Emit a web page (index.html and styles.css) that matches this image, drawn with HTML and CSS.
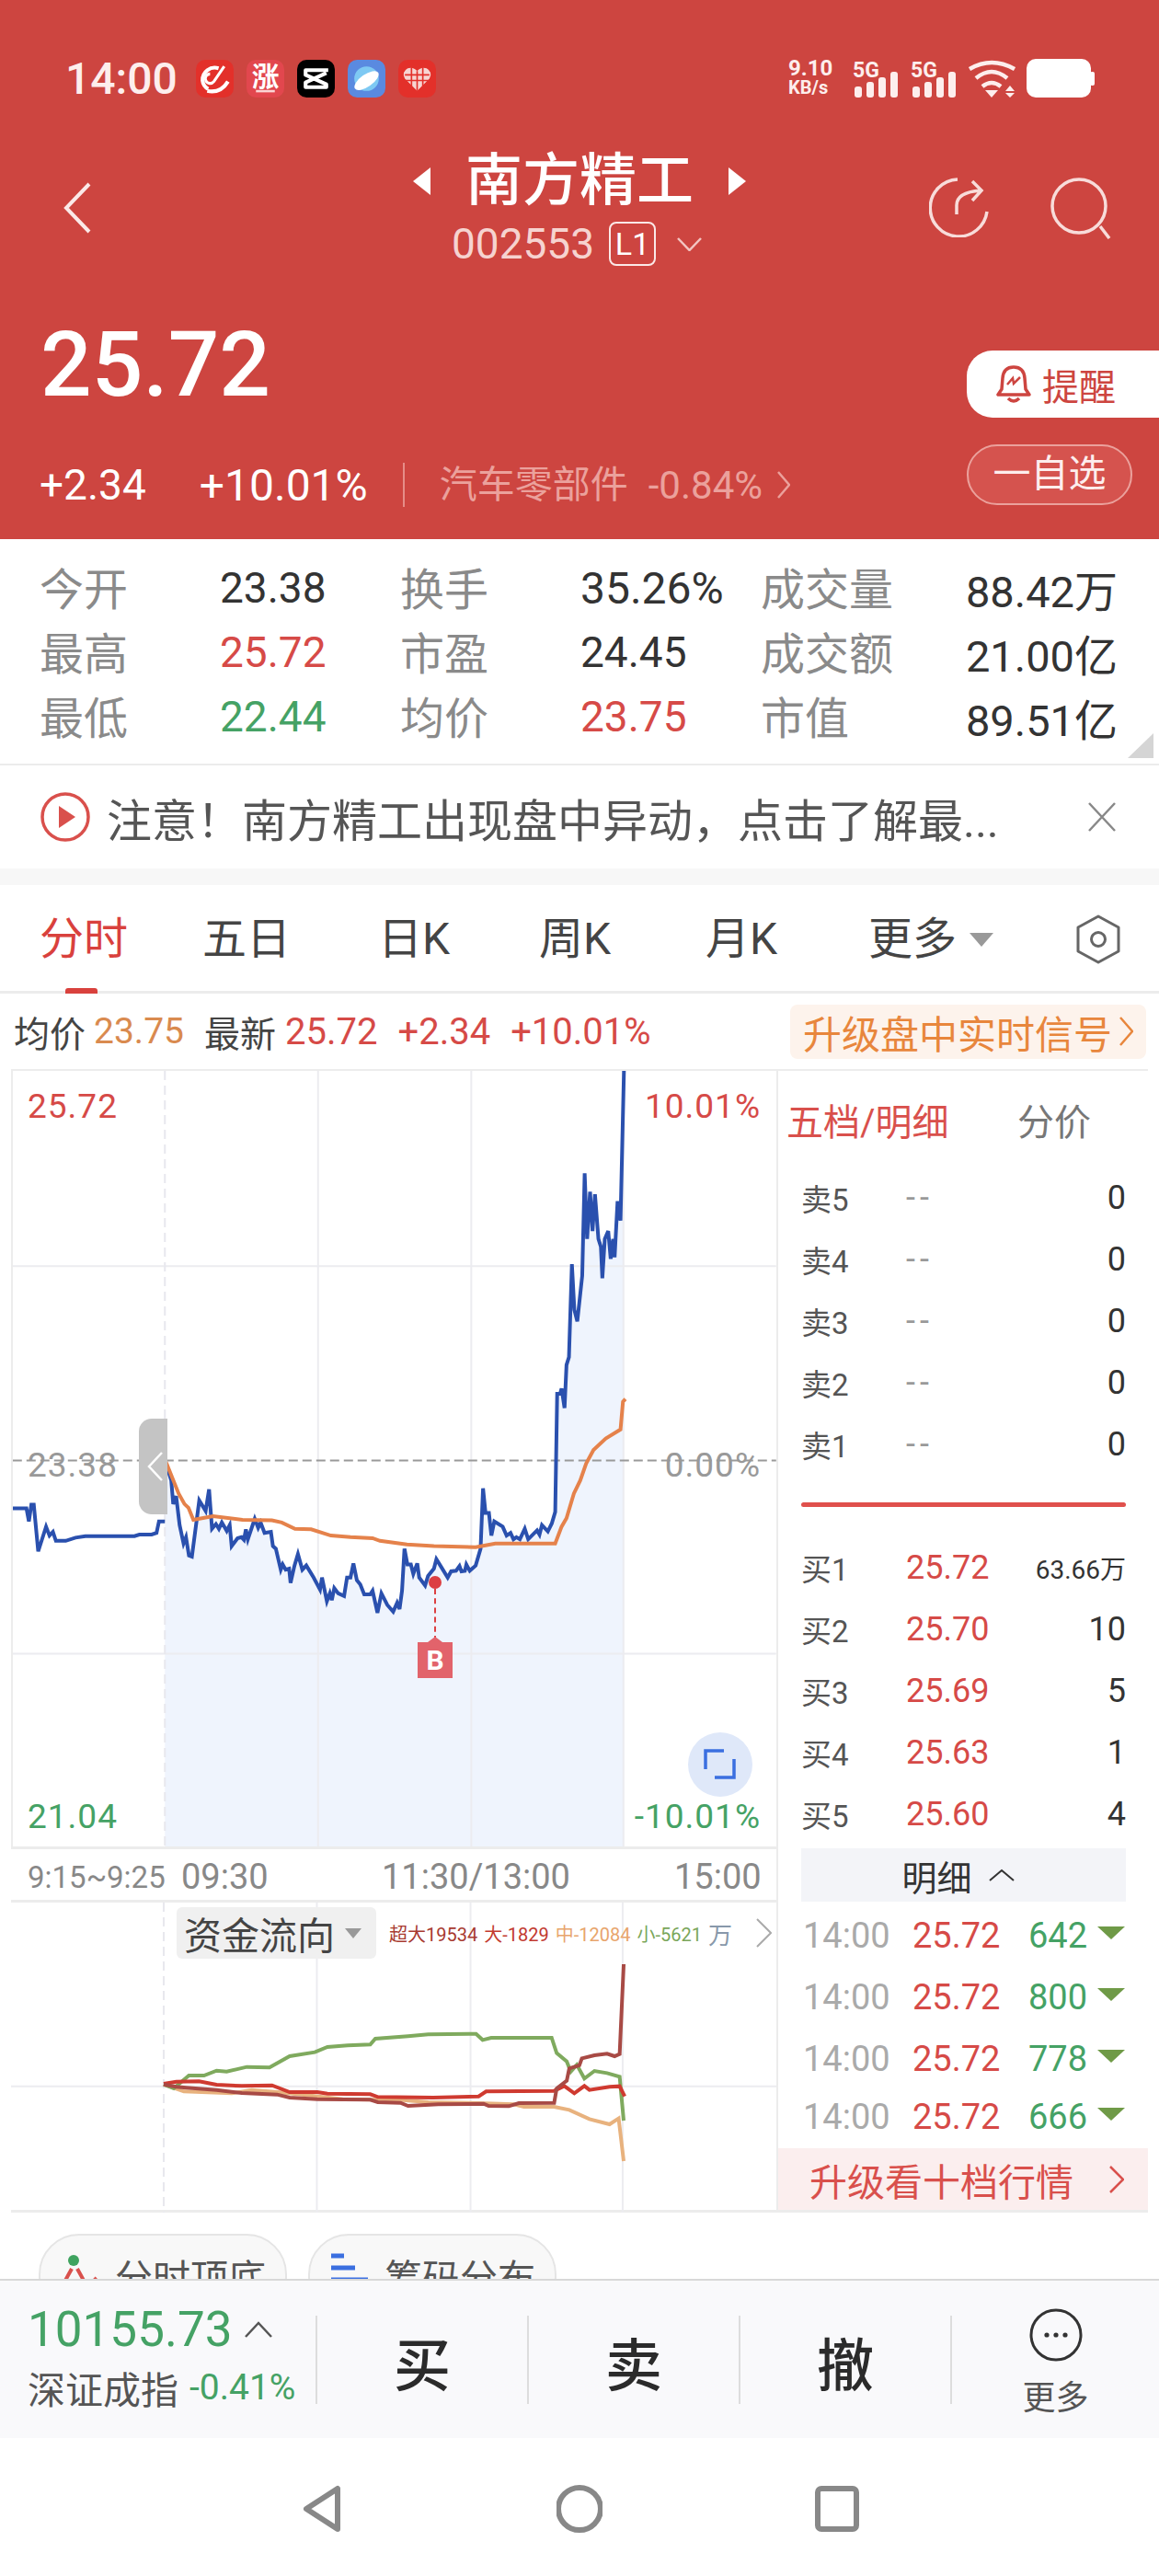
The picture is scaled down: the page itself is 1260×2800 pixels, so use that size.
FILE: index.html
```html
<!DOCTYPE html>
<html lang="zh-CN">

<head>
    <meta charset="UTF-8">
    <meta name="viewport" content="width=device-width, initial-scale=1.0">
    <title>南方精工 002553</title>
    <link rel="stylesheet" href="styles.css">
</head>

<body>
    <header class="top">
        <div class="status">
            <span class="clock">14:00</span>
            <div class="app-icons">
                <svg class="app" viewBox="0 0 40 40"><rect width="40" height="40" rx="10" fill="#e3302a"/><path d="M24 9 A13 13 0 0 0 7 22 A12 12 0 0 0 13 31" fill="none" stroke="#fff" stroke-width="4"/><path d="M30 7 L19 23 A5 5 0 1 1 15 15" fill="none" stroke="#fff" stroke-width="3"/><path d="M12 33 Q26 36 34 23" fill="none" stroke="#fff" stroke-width="4"/></svg>
                <svg class="app" viewBox="0 0 40 40"><rect width="40" height="40" rx="10" fill="#e2474e"/><text x="20" y="28" text-anchor="middle" class="app-text">涨</text><rect x="10" y="32" width="20" height="2.5" fill="#fbd5d5"/></svg>
                <svg class="app" viewBox="0 0 40 40"><rect width="40" height="40" rx="10" fill="#000"/><path d="M33 11 L9 11 L9 16 L31 26 L31 29 L9 29 L9 24 L31 14" fill="none" stroke="#fff" stroke-width="4" stroke-linejoin="round"/></svg>
                <svg class="app" viewBox="0 0 40 40"><rect width="40" height="40" rx="10" fill="#5a8ae0"/><circle cx="20" cy="20" r="13" fill="#7ec9f3"/><ellipse cx="20" cy="22" rx="15" ry="6.5" fill="#fff" transform="rotate(-35 20 22)"/></svg>
                <svg class="app" viewBox="0 0 40 40"><rect width="40" height="40" rx="10" fill="#e3302a"/><path d="M20 33 L7 20 Q3 13 10 9 Q16 7 20 12 Q24 7 30 9 Q37 13 33 20 Z" fill="#f7d5d2"/><path d="M7 16 H33 M8 22 H32 M14 8 V28 M20 12 V33 M26 8 V28" stroke="#e3302a" stroke-width="1.6"/></svg>
            </div>
            <div class="net">
                <div class="speed"><b>9.10</b><b>KB/s</b></div>
                <div class="signal">
                    <b>5G</b>
                    <div class="bars"><i class="b1"></i><i class="b2"></i><i class="b3"></i><i class="b4"></i></div>
                </div>
                <div class="signal">
                    <b>5G</b>
                    <div class="bars"><i class="b1"></i><i class="b2"></i><i class="b3"></i><i class="b4"></i></div>
                </div>
                <svg class="wifi" viewBox="0 0 51 41"><path d="M1 10 Q25 -4 50 10 M8 20 Q25 6 42 20 M15 29 Q25 21 35 29" fill="none" stroke="#fdeeed" stroke-width="4.5"/><path d="M18 33 H32 L25 41 Z M45 28 L50 34 H40 Z M40 36 H50 L45 41 Z" fill="#fdeeed"/></svg>
                <svg class="battery" viewBox="0 0 74 42"><rect width="70" height="42" rx="10" fill="#fff"/><rect x="69" y="14" width="5" height="15" rx="2" fill="#fff"/></svg>
            </div>
        </div>

        <div class="titlebar">
            <div class="title-left">
                <svg class="back" viewBox="0 0 32 56"><path d="M29 2 L4 28 L29 54" fill="none" stroke="#fbe9e8" stroke-width="4"/></svg>
            </div>
            <div class="title-mid">
                <div class="name-row">
                    <span class="tri-left"></span>
                    <h1>南方精工</h1>
                    <span class="tri-right"></span>
                </div>
                <div class="code-row">
                    <span class="code">002553</span>
                    <span class="level">L1</span>
                    <svg class="code-arrow" viewBox="0 0 27 15"><path d="M1 1 L13.5 14 L26 1" fill="none" stroke="#f3c5c2" stroke-width="2.5"/></svg>
                </div>
            </div>
            <div class="title-right">
                <svg class="share" viewBox="0 0 66 66"><path d="M31 3 A31 31 0 1 0 63 38" fill="none" stroke="#f8dcda" stroke-width="3.5"/><path d="M30 41 V31 Q30 17 56 15 M47 5 L57 15 L47 26" fill="none" stroke="#f8dcda" stroke-width="3.5"/></svg>
                <svg class="search" viewBox="0 0 66 68"><circle cx="31" cy="32" r="29" fill="none" stroke="#f8dcda" stroke-width="3.5"/><path d="M54 54 L64 67" stroke="#f8dcda" stroke-width="3.5"/></svg>
            </div>
        </div>

        <div class="quote">
            <div class="quote-main">
                <div class="price">25.72</div>
                <div class="change-row">
                    <span class="chg">+2.34</span>
                    <span class="pct">+10.01%</span>
                    <span class="sector">汽车零部件</span>
                    <span class="sector-pct">-0.84%</span>
                    <svg class="sector-arrow" viewBox="0 0 14 30"><path d="M1 1 L13 15 L1 29" fill="none" stroke="#eba19c" stroke-width="2.5"/></svg>
                </div>
            </div>
            <div class="quote-btns">
                <div class="remind">
                    <svg class="bell" viewBox="0 0 38 44"><path d="M19 3 Q8 3 7 15 L6 27 L2 33 H36 L32 27 L31 15 Q30 3 19 3 Z M13 37 Q19 43 25 37" fill="none" stroke="#cd4540" stroke-width="3.5" stroke-linejoin="round"/><path d="M12 22 L18 15 L19 21 L26 14" fill="none" stroke="#cd4540" stroke-width="2.5"/></svg>
                    <span>提醒</span>
                </div>
                <div class="watch">一自选</div>
            </div>
        </div>
    </header>

    <section class="stats">
        <span class="lbl">今开</span><span>23.38</span><span class="lbl">换手</span><span class="wide">35.26%</span><span class="lbl">成交量</span><span class="end">88.42万</span>
        <span class="lbl">最高</span><span class="up">25.72</span><span class="lbl">市盈</span><span>24.45</span><span class="lbl">成交额</span><span class="end">21.00亿</span>
        <span class="lbl">最低</span><span class="down">22.44</span><span class="lbl">均价</span><span class="up">23.75</span><span class="lbl">市值</span><span class="end">89.51亿</span>
        <i class="corner"></i>
    </section>

    <section class="notice">
        <svg class="play" viewBox="0 0 54 54"><circle cx="27" cy="27" r="25" fill="none" stroke="#d9504c" stroke-width="3.5"/><path d="M20 15 L38 27 L20 39 Z" fill="#d9504c"/></svg>
        <span class="notice-text">注意！南方精工出现盘中异动，点击了解最...</span>
        <svg class="close" viewBox="0 0 32 32"><path d="M2 1 L30 31 M30 1 L2 31" stroke="#888" stroke-width="2.5"/></svg>
    </section>

    <nav class="tabs">
        <span class="tab on">分时</span>
        <span class="tab">五日</span>
        <span class="tab">日K</span>
        <span class="tab">周K</span>
        <span class="tab">月K</span>
        <span class="tab more">更多<i class="more-tri"></i></span>
        <svg class="gear" viewBox="0 0 48 54"><path d="M24 2 L46 14 V40 L24 52 L2 40 V14 Z" fill="none" stroke="#666" stroke-width="3" stroke-linejoin="round"/><circle cx="24" cy="27" r="7.5" fill="none" stroke="#666" stroke-width="3"/></svg>
    </nav>

    <div class="subrow">
        <span>均价</span><span class="avg">23.75</span>
        <span class="sub-next">最新</span><span class="sub-val">25.72</span>
        <span class="sub-val sub-gap">+2.34</span>
        <span class="sub-val sub-gap">+10.01%</span>
        <div class="signal-tag">升级盘中实时信号<svg viewBox="0 0 15 32"><path d="M1 1 L14 16 L1 31" fill="none" stroke="#e8863c" stroke-width="2.5"/></svg></div>
    </div>

    <main class="board">
        <div class="charts">
            <div class="price-chart">
                <svg class="plot" viewBox="22.4 20 1555 1477" preserveAspectRatio="none">
                    <polygon class="area" points="332,1497 332,762 345,800 349,845 355,830 362,885 370,920 375,908 381,943 387,945 402,838 415,858 422,817 428,892 436,883 442,892 448,880 458,896 464,885 468,925 480,910 488,908 493,913 497,893 501,912 515,873 522,890 527,880 535,900 548,898 552,925 558,930 568,970 572,960 578,970 585,968 588,995 596,962 603,940 612,970 620,962 635,985 648,1008 652,985 662,1030 668,1015 672,1028 677,1005 685,1015 697,1020 703,985 710,985 716,958 723,990 730,998 738,1017 750,1017 755,1010 765,1052 773,1015 785,1037 797,1050 805,1033 810,1045 815,1010 820,930 826,960 833,960 838,978 846,958 850,985 862,1000 868,982 880,968 885,950 895,965 908,985 915,973 925,972 932,963 936,973 943,972 946,960 953,972 965,962 975,930 980,815 985,862 992,862 997,905 1003,878 1020,888 1028,905 1036,900 1042,912 1048,908 1055,912 1065,892 1072,912 1090,895 1095,903 1100,885 1112,897 1120,882 1127,860 1131,635 1137,635 1140,625 1146,662 1150,580 1155,565 1161,388 1166,475 1172,497 1182,410 1187,215 1192,340 1198,250 1203,325 1208,255 1215,340 1220,355 1223,415 1228,340 1235,325 1240,378 1245,340 1248,375 1254,268 1260,305 1266,20 1266,1497"/>
                    <path class="grid" d="M22 392 H1577 M22 1130 H1577 M644 20 V1497 M956 20 V1497 M1266 20 V1497"/>
                    <path class="grid-dash" d="M332 20 V1497"/>
                    <path class="zero" d="M22 762 H1577"/>
                    <polyline class="line-blue" points="22,853 50,853 55,878 60,846 65,846 74,935 90,888 97,905 104,898 110,915 130,915 150,909 170,906 270,906 280,903 305,903 315,900 320,878 332,878"/>
                    <polyline class="line-blue" points="332,762 345,800 349,845 355,830 362,885 370,920 375,908 381,943 387,945 402,838 415,858 422,817 428,892 436,883 442,892 448,880 458,896 464,885 468,925 480,910 488,908 493,913 497,893 501,912 515,873 522,890 527,880 535,900 548,898 552,925 558,930 568,970 572,960 578,970 585,968 588,995 596,962 603,940 612,970 620,962 635,985 648,1008 652,985 662,1030 668,1015 672,1028 677,1005 685,1015 697,1020 703,985 710,985 716,958 723,990 730,998 738,1017 750,1017 755,1010 765,1052 773,1015 785,1037 797,1050 805,1033 810,1045 815,1010 820,930 826,960 833,960 838,978 846,958 850,985 862,1000 868,982 880,968 885,950 895,965 908,985 915,973 925,972 932,963 936,973 943,972 946,960 953,972 965,962 975,930 980,815 985,862 992,862 997,905 1003,878 1020,888 1028,905 1036,900 1042,912 1048,908 1055,912 1065,892 1072,912 1090,895 1095,903 1100,885 1112,897 1120,882 1127,860 1131,635 1137,635 1140,625 1146,662 1150,580 1155,565 1161,388 1166,475 1172,497 1182,410 1187,215 1192,340 1198,250 1203,325 1208,255 1215,340 1220,355 1223,415 1228,340 1235,325 1240,378 1245,340 1248,375 1254,268 1260,305 1267,20"/>
                    <polyline class="line-orange" points="332,760 345,790 360,825 372,845 380,852 390,875 430,868 490,875 550,876 570,880 597,892 630,893 670,905 710,908 755,910 770,915 825,922 880,925 965,927 1005,920 1127,920 1140,888 1150,872 1165,825 1178,800 1190,768 1205,742 1230,720 1260,703 1265,650 1270,645"/>
                </svg>
                <span class="tag tag-l up tag-top">25.72</span>
                <span class="tag tag-r up tag-top">10.01%</span>
                <span class="tag tag-l mute tag-mid">23.38</span>
                <span class="tag tag-r mute tag-mid">0.00%</span>
                <span class="tag tag-l down tag-low">21.04</span>
                <span class="tag tag-r down tag-low">-10.01%</span>
                <div class="handle"><svg viewBox="0 0 17 32"><path d="M16 1 L2 16 L16 31" fill="none" stroke="#fff" stroke-width="2.5"/></svg></div>
                <i class="buy-dot"></i>
                <i class="buy-stem"></i>
                <span class="buy-flag">B</span>
                <div class="expand"><svg viewBox="0 0 70 70"><path d="M39 20 H19 V40 M50 29 V49 H29" fill="none" stroke="#3b6fe0" stroke-width="3.5"/></svg></div>
            </div>

            <div class="axis">
                <span>9:15~9:25</span>
                <span class="axis-big">09:30</span>
                <span class="axis-big">11:30/13:00</span>
                <span class="axis-big">15:00</span>
            </div>

            <div class="flow">
                <svg class="plot" viewBox="22 204 1519 1011" preserveAspectRatio="none">
                    <path class="grid" d="M22 803 H1541 M629 204 V1215 M934 204 V1215 M1236 204 V1215"/>
                    <path class="grid-dash" d="M325 204 V1215"/>
                    <polyline class="f-mid" points="325,797 365,820 460,826 500,815 550,822 600,830 680,845 800,848 850,855 950,858 1020,862 1040,870 1100,870 1130,880 1170,910 1210,927 1228,908 1238,1047"/>
                    <polyline class="f-small" points="325,797 345,810 375,768 405,768 430,752 450,755 490,740 535,742 575,705 625,692 650,675 690,670 735,667 745,648 810,640 850,634 945,632 958,652 975,645 1095,645 1105,695 1125,722 1133,755 1145,733 1160,778 1180,753 1205,760 1230,772 1238,915"/>
                    <polyline class="f-big" points="325,795 350,788 395,787 430,798 480,802 540,800 575,822 630,822 650,827 735,829 750,838 860,840 950,836 965,820 1100,818 1120,802 1140,826 1160,802 1170,815 1210,805 1230,803 1240,836"/>
                    <polyline class="f-huge" points="325,797 350,805 370,808 430,815 480,825 550,830 575,840 630,845 735,847 750,855 795,857 810,867 870,862 960,860 970,867 1010,868 1030,858 1100,857 1105,810 1125,785 1130,745 1150,735 1155,712 1180,702 1205,697 1220,705 1230,698 1238,405"/>
                </svg>
                <div class="flow-head">
                    <div class="flow-pick">资金流向<i class="pick-tri"></i></div>
                    <div class="legend">
                        <span class="c-huge">超大19534</span>
                        <span class="c-big">大-1829</span>
                        <span class="c-mid">中-12084</span>
                        <span class="c-small">小-5621</span>
                        <span class="c-unit">万</span>
                    </div>
                    <svg class="legend-arrow" viewBox="0 0 17 32"><path d="M1 1 L16 16 L1 31" fill="none" stroke="#aaa" stroke-width="2"/></svg>
                </div>
            </div>
        </div>

        <aside class="side">
            <div class="side-head"><span class="side-title">五档/明细</span><span class="side-alt">分价</span></div>
            <div class="book">
                <div class="row"><span class="who">卖5</span><span class="none">--</span><span class="vol">0</span></div>
                <div class="row"><span class="who">卖4</span><span class="none">--</span><span class="vol">0</span></div>
                <div class="row"><span class="who">卖3</span><span class="none">--</span><span class="vol">0</span></div>
                <div class="row"><span class="who">卖2</span><span class="none">--</span><span class="vol">0</span></div>
                <div class="row"><span class="who">卖1</span><span class="none">--</span><span class="vol">0</span></div>
                <div class="rule"></div>
                <div class="row"><span class="who">买1</span><span class="up">25.72</span><span class="vol vol-sm">63.66万</span></div>
                <div class="row"><span class="who">买2</span><span class="up">25.70</span><span class="vol">10</span></div>
                <div class="row"><span class="who">买3</span><span class="up">25.69</span><span class="vol">5</span></div>
                <div class="row"><span class="who">买4</span><span class="up">25.63</span><span class="vol">1</span></div>
                <div class="row"><span class="who">买5</span><span class="up">25.60</span><span class="vol">4</span></div>
                <div class="detail-bar">明细<svg viewBox="0 0 28 14"><path d="M1 13 L14 2 L27 13" fill="none" stroke="#333" stroke-width="2"/></svg></div>
                <div class="tick"><span class="t">14:00</span><span class="up">25.72</span><span class="down">642</span><i class="tick-tri"></i></div>
                <div class="tick"><span class="t">14:00</span><span class="up">25.72</span><span class="down">800</span><i class="tick-tri"></i></div>
                <div class="tick"><span class="t">14:00</span><span class="up">25.72</span><span class="down">778</span><i class="tick-tri"></i></div>
                <div class="tick"><span class="t">14:00</span><span class="up">25.72</span><span class="down">666</span><i class="tick-tri"></i></div>
            </div>
            <div class="upgrade"><span>升级看十档行情</span><svg viewBox="0 0 16 30"><path d="M1 1 L15 15 L1 29" fill="none" stroke="#d9504c" stroke-width="2.5"/></svg></div>
        </aside>
    </main>

    <div class="chips">
        <div class="chip">
            <svg viewBox="0 0 44 50"><circle cx="15" cy="9" r="6" fill="#3fa35f"/><path d="M13 18 L2 38 M19 18 L30 38 L40 28" fill="none" stroke="#d9504c" stroke-width="4"/></svg>
            <span>分时顶底</span>
        </div>
        <div class="chip">
            <svg viewBox="0 0 40 50"><path d="M0 4 H14 M0 17 H26 M0 30 H40" stroke="#3b6fe0" stroke-width="5"/></svg>
            <span>筹码分布</span>
        </div>
    </div>

    <footer class="tradebar">
        <div class="index">
            <div class="index-top"><span class="index-val">10155.73</span><svg viewBox="0 0 30 18"><path d="M1 17 L15 2 L29 17" fill="none" stroke="#555" stroke-width="2.5"/></svg></div>
            <div class="index-sub"><span>深证成指</span><span class="index-pct">-0.41%</span></div>
        </div>
        <div class="trade">买</div>
        <div class="trade">卖</div>
        <div class="trade">撤</div>
        <div class="trade-more">
            <svg viewBox="0 0 58 58"><circle cx="29" cy="29" r="27" fill="none" stroke="#333" stroke-width="3"/><circle cx="19" cy="29" r="2.6" fill="#333"/><circle cx="29" cy="29" r="2.6" fill="#333"/><circle cx="39" cy="29" r="2.6" fill="#333"/></svg>
            <span>更多</span>
        </div>
    </footer>

    <div class="sysnav">
        <svg viewBox="0 0 50 52"><path d="M42 4 V48 L8 26 Z" fill="none" stroke="#888" stroke-width="6" stroke-linejoin="round"/></svg>
        <svg viewBox="0 0 50 52"><circle cx="25" cy="26" r="23" fill="none" stroke="#888" stroke-width="6"/></svg>
        <svg viewBox="0 0 50 52"><rect x="4" y="4" width="42" height="44" rx="4" fill="none" stroke="#888" stroke-width="6"/></svg>
    </div>
</body>

</html>
```

FILE: styles.css
```css
/* --- Общие стили --- */
:root {
    --red: #cd4540;
    --up: #d64a47;
    --down: #45a265;
    --line: #ececec;
    --font: Roboto, "Noto Sans CJK SC", sans-serif;
}

* {
    box-sizing: border-box;
}

body {
    margin: 0;
    width: 1260px;
    height: 2800px;
    overflow: hidden;
    background: #fff;
    color: #333;
    font-family: var(--font);
}

i {
    display: block;
}

.up {
    color: var(--up);
}

.down {
    color: var(--down);
}

.mute {
    color: #999;
}

/* --- Красная шапка --- */
.top {
    height: 586px;
    padding-top: 64px;
    background: var(--red);
    color: #fff;
}

.status {
    display: flex;
    align-items: center;
    height: 42px;
    padding: 0 70px 0 71px;
}

.clock {
    width: 122px;
    font-size: 48px;
    font-weight: 500;
    color: #fdeeed;
}

.app-icons {
    display: flex;
    gap: 14px;
    margin-left: 20px;
}

.app {
    width: 41px;
    height: 41px;
}

.app-text {
    font-size: 29px;
    font-weight: 700;
    fill: #fff;
}

.net {
    display: flex;
    align-items: flex-end;
    height: 42px;
    margin-left: auto;
    color: #fdeeed;
}

.speed {
    display: flex;
    flex-direction: column;
    width: 70px;
    line-height: 21px;
}

.speed b:first-child {
    font-size: 24px;
}

.speed b:last-child {
    font-size: 20px;
}

.signal {
    width: 63px;
    display: flex;
    flex-direction: column;
    line-height: 18px;
}

.signal b {
    font-size: 23px;
    margin-bottom: -8px;
}

.bars {
    display: flex;
    align-items: flex-end;
    gap: 5px;
    height: 28px;
    padding-left: 2px;
}

.bars i {
    width: 8px;
    border-radius: 3px;
    background: #fdeeed;
}

.b1 {
    height: 12px;
}

.b2 {
    height: 17px;
}

.b3 {
    height: 22px;
}

.b4 {
    height: 28px;
}

.wifi {
    width: 51px;
    height: 41px;
    margin-right: 12px;
}

.battery {
    width: 74px;
    height: 42px;
}

.titlebar {
    display: grid;
    grid-template-columns: 1fr auto 1fr;
    align-items: center;
    margin-top: 56px;
}

.title-left {
    padding-left: 68px;
}

.back {
    display: block;
    width: 32px;
    height: 56px;
}

.name-row {
    display: flex;
    align-items: center;
    justify-content: center;
    gap: 38px;
    height: 70px;
}

.name-row h1 {
    margin: 0;
    font-size: 62px;
    font-weight: 500;
    line-height: 70px;
}

.tri-left,
.tri-right {
    width: 0;
    height: 0;
    border-top: 15px solid transparent;
    border-bottom: 15px solid transparent;
}

.tri-left {
    border-right: 19px solid #fff;
}

.tri-right {
    border-left: 19px solid #fff;
}

.code-row {
    display: flex;
    align-items: center;
    justify-content: center;
    height: 48px;
    margin-top: 9px;
    padding-right: 6px;
}

.code {
    font-size: 46px;
    color: #f6d3d0;
}

.level {
    width: 51px;
    height: 48px;
    margin-left: 16px;
    border: 2px solid #fbe9e8;
    border-radius: 8px;
    font-size: 34px;
    line-height: 44px;
    text-align: center;
}

.code-arrow {
    width: 27px;
    height: 15px;
    margin-left: 23px;
}

.title-right {
    display: flex;
    justify-content: flex-end;
    gap: 66px;
    padding-right: 52px;
}

.share {
    width: 66px;
    height: 66px;
}

.search {
    width: 66px;
    height: 68px;
}

.quote {
    display: flex;
    justify-content: space-between;
    margin-top: 56px;
}

.quote-main {
    padding-left: 43px;
}

.price {
    height: 104px;
    padding-left: 1px;
    font-size: 98px;
    font-weight: 500;
    line-height: 104px;
}

.change-row {
    display: flex;
    align-items: center;
    height: 48px;
    margin-top: 54px;
    font-size: 46px;
}

.pct {
    margin-left: 58px;
    font-size: 48px;
}

.sector {
    margin-left: 38px;
    padding-left: 38px;
    border-left: 2px solid #e68d88;
    font-size: 41px;
    line-height: 48px;
    color: #eba19c;
}

.sector-pct {
    margin-left: 22px;
    font-size: 42px;
    color: #eba19c;
}

.sector-arrow {
    width: 14px;
    height: 30px;
    margin-left: 16px;
}

.quote-btns {
    width: 209px;
    padding-top: 36px;
}

.remind {
    display: flex;
    align-items: center;
    gap: 12px;
    height: 73px;
    padding-left: 32px;
    border-radius: 28px 0 0 28px;
    background: #fff;
    color: var(--red);
    font-size: 40px;
}

.bell {
    width: 38px;
    height: 44px;
}

.watch {
    width: 180px;
    height: 66px;
    margin-top: 29px;
    border: 2px solid #eba19c;
    border-radius: 33px;
    background: #d5534e;
    font-size: 41px;
    line-height: 60px;
    text-align: center;
    color: #fdeeed;
}

/* --- Таблица показателей --- */
.stats {
    position: relative;
    display: grid;
    grid-template-columns: 196px 196px 196px 196px 196px 1fr;
    grid-auto-rows: 70px;
    align-items: center;
    height: 246px;
    padding: 18px 45px 0 43px;
    border-bottom: 2px solid var(--line);
    font-size: 46px;
    color: #333;
}

.wide {
    font-size: 48px;
    white-space: nowrap;
}

.lbl {
    margin-top: -5px;
    font-size: 48px;
    color: #8a8a8a;
}

.end {
    font-size: 47px;
    text-align: right;
}

.corner {
    position: absolute;
    right: 6px;
    bottom: 6px;
    width: 28px;
    height: 27px;
    background: #d5d5d5;
    clip-path: polygon(100% 0, 100% 100%, 0 100%);
}

/* --- Уведомление --- */
.notice {
    display: flex;
    align-items: center;
    height: 130px;
    padding: 0 46px 0 44px;
    border-bottom: 18px solid #f7f7f7;
}

.play {
    width: 54px;
    height: 54px;
}

.notice-text {
    margin-left: 18px;
    font-size: 49px;
    color: #555;
    white-space: nowrap;
}

.close {
    width: 32px;
    height: 32px;
    margin-left: auto;
}

/* --- Вкладки --- */
.tabs {
    display: grid;
    grid-template-columns: 177px 191px 175px 181px 177px 1fr auto;
    align-items: center;
    height: 118px;
    padding: 0 42px 0 43px;
    border-bottom: 3px solid var(--line);
    font-size: 48px;
    color: #444;
}

.tab {
    position: relative;
    line-height: 118px;
}

.tab.on {
    color: #d9413d;
}

.tab.on::after {
    content: "";
    position: absolute;
    left: 28px;
    bottom: 0;
    width: 35px;
    height: 6px;
    border-radius: 3px 3px 0 0;
    background: #d9413d;
}

.more {
    display: flex;
    align-items: center;
    gap: 14px;
}

.more-tri {
    width: 0;
    height: 0;
    border-left: 13px solid transparent;
    border-right: 13px solid transparent;
    border-top: 15px solid #999;
}

.gear {
    width: 48px;
    height: 54px;
}

.subrow {
    display: flex;
    align-items: center;
    height: 82px;
    padding: 0 14px 0 15px;
    font-size: 39px;
    color: #444;
}

.avg {
    margin-left: 9px;
    color: #d98a4f;
}

.sub-next {
    margin-left: 22px;
}

.sub-val {
    margin-left: 10px;
    font-size: 40px;
    color: var(--up);
}

.sub-gap {
    margin-left: 22px;
}

.signal-tag {
    display: flex;
    align-items: center;
    gap: 8px;
    height: 59px;
    margin-left: auto;
    padding: 0 14px;
    border-radius: 8px;
    background: #fdf3ec;
    font-size: 42px;
    color: #e8863c;
}

.signal-tag svg {
    width: 15px;
    height: 32px;
}

/* --- Графики --- */
.board {
    display: flex;
    height: 1243px;
    margin: 0 12px;
    border-top: 2px solid var(--line);
    border-bottom: 3px solid var(--line);
}

.charts {
    width: 834px;
    border-right: 2px solid var(--line);
}

.price-chart {
    position: relative;
    height: 846px;
    border-left: 2px solid var(--line);
    border-bottom: 3px solid var(--line);
}

.plot {
    display: block;
    width: 100%;
    height: 100%;
}

.plot polyline,
.plot path {
    fill: none;
    vector-effect: non-scaling-stroke;
}

.area {
    fill: #eff4fd;
}

.grid {
    stroke: #ececf0;
    stroke-width: 2;
}

.grid-dash {
    stroke: #e8e8ee;
    stroke-width: 2;
    stroke-dasharray: 10 6;
}

.zero {
    stroke: #999;
    stroke-width: 2;
    stroke-dasharray: 10 5;
}

.line-blue {
    stroke: #2a50ae;
    stroke-width: 4;
}

.line-orange {
    stroke: #e5824b;
    stroke-width: 4;
}

.tag {
    position: absolute;
    font-size: 37px;
    line-height: 40px;
    letter-spacing: 1px;
}

.tag-l {
    left: 16px;
}

.tag-r {
    right: 17px;
}

.tag-top {
    top: 19px;
}

.tag-mid {
    top: 409px;
}

.tag-low {
    top: 791px;
}

.handle {
    position: absolute;
    left: 137px;
    top: 378px;
    display: flex;
    align-items: center;
    padding-left: 9px;
    width: 31px;
    height: 104px;
    border-radius: 14px 0 0 14px;
    background: #c4c4c4;
}

.handle svg {
    width: 17px;
    height: 32px;
}

.buy-dot {
    position: absolute;
    left: 452px;
    top: 549px;
    width: 14px;
    height: 14px;
    border-radius: 50%;
    background: #dc3f42;
}

.buy-stem {
    position: absolute;
    left: 458px;
    top: 563px;
    height: 57px;
    border-left: 2px dashed #dc3f42;
}

.buy-flag {
    position: absolute;
    left: 440px;
    top: 621px;
    width: 38px;
    height: 39px;
    background: #e2636b;
    color: #fff;
    font-size: 30px;
    font-weight: 700;
    line-height: 39px;
    text-align: center;
}

.buy-flag::before {
    content: "";
    position: absolute;
    left: 11px;
    top: -6px;
    border-left: 8px solid transparent;
    border-right: 8px solid transparent;
    border-bottom: 6px solid #e2636b;
}

.expand {
    position: absolute;
    left: 734px;
    top: 719px;
    width: 70px;
    height: 70px;
    border-radius: 50%;
    background: #dfe8f9;
}

.axis {
    display: grid;
    grid-template-columns: 167px 218px 318px auto;
    align-items: center;
    height: 58px;
    padding: 5px 0 0 18px;
    border-bottom: 3px solid var(--line);
    font-size: 33px;
    color: #888;
}

.axis-big {
    font-size: 38px;
}

.flow {
    position: relative;
    height: 337px;
}

.flow-head {
    position: absolute;
    left: 180px;
    top: 5px;
    display: flex;
    align-items: center;
    height: 56px;
}

.flow-pick {
    display: flex;
    align-items: center;
    gap: 11px;
    width: 217px;
    height: 56px;
    padding-left: 8px;
    border-radius: 6px;
    background: #f0f0f0;
    font-size: 41px;
    color: #444;
}

.pick-tri {
    width: 0;
    height: 0;
    border-left: 9px solid transparent;
    border-right: 9px solid transparent;
    border-top: 11px solid #999;
}

.legend {
    display: flex;
    align-items: center;
    gap: 7px;
    margin-left: 14px;
    font-size: 20px;
}

.c-huge {
    color: #a83a30;
}

.c-big {
    color: #c23a30;
}

.c-mid {
    color: #e8a56c;
}

.c-small {
    color: #7aa65a;
}

.c-unit {
    font-size: 26px;
    color: #8898aa;
}

.legend-arrow {
    width: 17px;
    height: 32px;
    margin-left: 26px;
}

.f-huge {
    stroke: #a84a45;
    stroke-width: 4;
}

.f-big {
    stroke: #cf3a30;
    stroke-width: 4;
}

.f-mid {
    stroke: #e8b27e;
    stroke-width: 4;
}

.f-small {
    stroke: #7faa5e;
    stroke-width: 4;
}

/* --- Стакан --- */
.side {
    flex: 1;
    display: flex;
    flex-direction: column;
}

.side-head {
    display: flex;
    align-items: center;
    height: 104px;
    padding: 1px 0 0 9px;
    font-size: 40px;
}

.side-title {
    width: 251px;
    color: #d9504c;
}

.side-alt {
    color: #777;
}

.book {
    height: 1067px;
    padding: 0 24px 0 25px;
}

.row {
    display: grid;
    grid-template-columns: 114px 1fr auto;
    align-items: center;
    height: 67px;
    font-size: 36px;
}

.who {
    font-size: 33px;
    color: #555;
}

.none {
    letter-spacing: 5px;
    color: #999;
}

.vol {
    color: #333;
}

.vol-sm {
    font-size: 28px;
}

.rule {
    height: 5px;
    margin: 30px 0 32px;
    border-radius: 3px;
    background: #e0504c;
}

.detail-bar {
    display: flex;
    align-items: center;
    justify-content: center;
    gap: 18px;
    height: 58px;
    margin: 4px 0 3px;
    padding-right: 12px;
    background: #f3f4f8;
    font-size: 38px;
    color: #333;
}

.detail-bar svg {
    width: 28px;
    height: 14px;
}

.tick {
    display: grid;
    grid-template-columns: 119px 126px 75px 30px;
    align-items: center;
    height: 67px;
    padding-left: 2px;
    font-size: 38px;
}

.tick:last-child {
    height: 60px;
}

.tick .t {
    color: #aaa;
}

.tick-tri {
    width: 0;
    height: 0;
    margin-bottom: 6px;
    border-left: 15px solid transparent;
    border-right: 15px solid transparent;
    border-top: 14px solid #6f9a47;
}

.upgrade {
    display: flex;
    align-items: center;
    justify-content: space-between;
    height: 67px;
    padding: 0 26px 0 34px;
    background: #fbeeee;
    font-size: 41px;
    color: #d9504c;
}

.upgrade svg {
    width: 16px;
    height: 30px;
}

/* --- Кнопки-чипсы --- */
.chips {
    display: flex;
    gap: 23px;
    height: 72px;
    overflow: hidden;
    padding: 23px 0 0 42px;
}

.chip {
    display: flex;
    align-items: center;
    gap: 16px;
    height: 90px;
    padding: 0 21px;
    border: 2px solid #e5e5e5;
    border-radius: 44px;
    background: #f8f8f8;
    font-size: 41px;
    color: #555;
    white-space: nowrap;
}

.chip svg {
    width: 44px;
    height: 50px;
}

/* --- Нижняя панель --- */
.tradebar {
    display: flex;
    height: 173px;
    padding-top: 38px;
    border-top: 2px solid #d8d8d8;
    background: #f9f9fb;
}

.index {
    width: 343px;
    height: 96px;
    padding-left: 30px;
    color: #555;
}

.index-top {
    display: flex;
    align-items: center;
    height: 48px;
    margin-top: -9px;
}

.index-val {
    font-size: 53px;
    color: var(--down);
}

.index-top svg {
    width: 30px;
    height: 18px;
    margin-left: 14px;
}

.index-sub {
    display: flex;
    align-items: center;
    gap: 12px;
    height: 50px;
    margin-top: 14px;
    font-size: 41px;
    white-space: nowrap;
}

.index-pct {
    font-size: 39px;
    color: var(--down);
}

.trade {
    width: 230px;
    height: 96px;
    padding-top: 8px;
    border-left: 2px solid #ddd;
    font-size: 62px;
    font-weight: 500;
    line-height: 96px;
    text-align: center;
    color: #2b2b2b;
}

.trade-more {
    flex: 1;
    display: flex;
    flex-direction: column;
    align-items: center;
    height: 96px;
    border-left: 2px solid #ddd;
    font-size: 36px;
    color: #555;
}

.trade-more svg {
    width: 58px;
    height: 58px;
    margin-top: -8px;
    flex-shrink: 0;
}

.trade-more span {
    margin-top: 18px;
    line-height: 44px;
}

.sysnav {
    display: flex;
    justify-content: center;
    gap: 230px;
    padding-top: 51px;
}

.sysnav svg {
    width: 50px;
    height: 52px;
}
```
